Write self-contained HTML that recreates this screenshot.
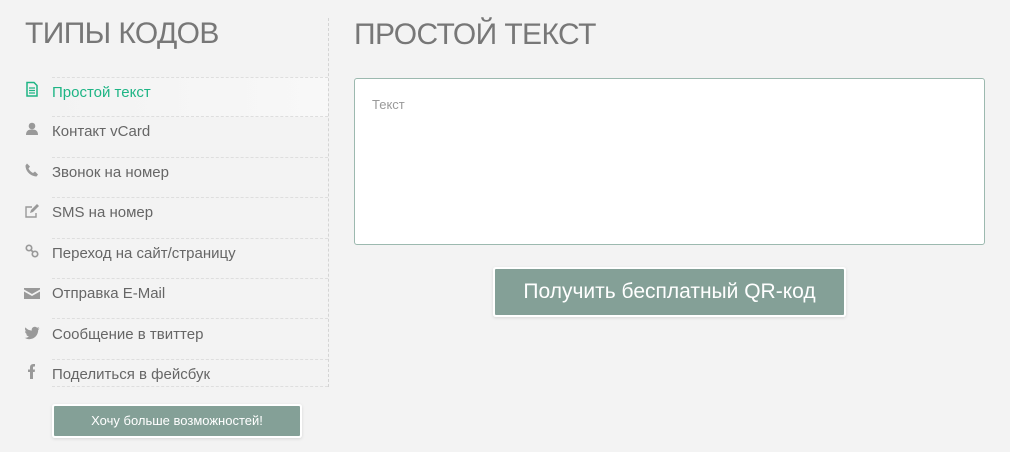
<!DOCTYPE html>
<html><head><meta charset="utf-8"><style>
*{margin:0;padding:0;box-sizing:border-box}
body{width:1010px;height:452px;overflow:hidden;background:#f3f3f3;font-family:"Liberation Sans",sans-serif;color:#666;position:relative}
.h{position:absolute;font-weight:normal;color:#777;font-size:30px;white-space:nowrap;letter-spacing:-0.6px}
.vl{position:absolute;left:328px;top:18px;height:369px;border-left:1px dashed #d4d4d4}
.it{position:absolute;left:52px;width:276px;height:40px;border-bottom:1px dashed #dedede;font-size:15px;color:#666;line-height:40px}
.it.a{color:#1eb585;background:linear-gradient(90deg,#f3f3f3,#f8f8f8);border-top:1px dashed #dedede}
.ic{position:absolute;left:24px;width:16px;height:16px}
.ta{position:absolute;left:354px;top:78px;width:631px;height:167px;background:#fff;border:1px solid #9cb9af;border-radius:3px;font-size:13px;color:#999;padding:18px 0 0 17px}
.b{position:absolute;background:#84a097;color:#fff;text-align:center;box-shadow:0 0 0 2px #fff,0 1px 3px 2px rgba(0,0,0,.12);border-radius:1px}
</style></head><body>
<div class="h" style="left:25px;top:17px">ТИПЫ КОДОВ</div>
<div class="h" style="left:354px;top:18px">ПРОСТОЙ ТЕКСТ</div>
<div class="vl"></div>
<div class="it a" style="top:77px;line-height:30px">Простой текст</div>
<div class="it" style="top:118px;line-height:28px">Контакт vCard</div>
<div class="it" style="top:158px;line-height:30px">Звонок на номер</div>
<div class="it" style="top:199px;line-height:28px">SMS на номер</div>
<div class="it" style="top:239px;line-height:30px">Переход на сайт/страницу</div>
<div class="it" style="top:279px;line-height:30px">Отправка E-Mail</div>
<div class="it" style="top:320px;line-height:30px">Сообщение в твиттер</div>
<div class="it" style="top:360px;height:27px;line-height:30px">Поделиться в фейсбук</div>
<svg class="ic" style="top:81px" viewBox="0 0 16 16"><path d="M3 1.5h7l3 3V15H3z" fill="none" stroke="#1eb585" stroke-width="1.5"/><path d="M5 7h6M5 9.5h6M5 12h6" stroke="#1eb585" stroke-width="1.2"/></svg>
<svg class="ic" style="top:121px" viewBox="0 0 16 16" fill="#999"><circle cx="8" cy="5" r="3.3"/><path d="M2 14c0-4 2-5.5 6-5.5s6 1.5 6 5.5z"/></svg>
<svg class="ic" style="top:162px" viewBox="0 0 16 16" fill="#999"><path d="M3 1.5l3 3-1.5 2c1 2 2.5 3.5 4.5 4.5l2-1.5 3 3-1.5 2C6 14 1.5 9 1.5 3.5z"/></svg>
<svg class="ic" style="top:203px" viewBox="0 0 16 16"><path d="M12 10v4H2V4h6" fill="none" stroke="#999" stroke-width="1.4"/><path d="M6 10l1-3 6-6 2 2-6 6z" fill="#999"/></svg>
<svg class="ic" style="top:243px" viewBox="0 0 16 16" fill="none" stroke="#999" stroke-width="1.7"><circle cx="5" cy="5" r="2.7"/><circle cx="11" cy="11" r="2.7"/><path d="M7 7l2 2"/></svg>
<svg class="ic" style="top:285px" viewBox="0 0 16 16" fill="#999"><path d="M0 3h16v1.5L8 9 0 4.5z"/><path d="M0 6.5l8 4.5 8-4.5V14H0z"/></svg>
<svg class="ic" style="top:325px" viewBox="0 0 16 16" fill="#999"><path d="M15.5 3.2c-.6.3-1.2.4-1.8.5.7-.4 1.1-1 1.4-1.700-.6.4-1.3.6-2 .8A3.1 3.1 0 0 0 7.8 5.6 8.8 8.8 0 0 1 1.4 2.4a3.1 3.1 0 0 0 1 4.1c-.5 0-1-.2-1.4-.4 0 1.5 1.1 2.8 2.5 3.1-.5.1-1 .2-1.4.1.4 1.2 1.600 2.1 2.9 2.2A6.2 6.2 0 0 1 .5 12.8 8.8 8.8 0 0 0 5.3 14.2c5.7 0 8.9-4.8 8.9-8.9v-.4c.5-.4 1-.9 1.3-1.700z"/></svg>
<svg class="ic" style="top:363px" viewBox="0 0 16 16" fill="#999"><path d="M6 16V9H4V6.5h2V4.5C6 2.5 7 1 9.5 1H11v2.5H10c-.8 0-1 .4-1 1V6.5h2L10.7 9H9v7z"/></svg>
<div class="ta">Текст</div>
<div class="b" style="left:495px;top:269px;width:349px;height:46px;line-height:46px;font-size:21px">Получить бесплатный QR-код</div>
<div class="b" style="left:54px;top:406px;width:246px;height:30px;line-height:30px;font-size:13px">Хочу больше возможностей!</div>
</body></html>
